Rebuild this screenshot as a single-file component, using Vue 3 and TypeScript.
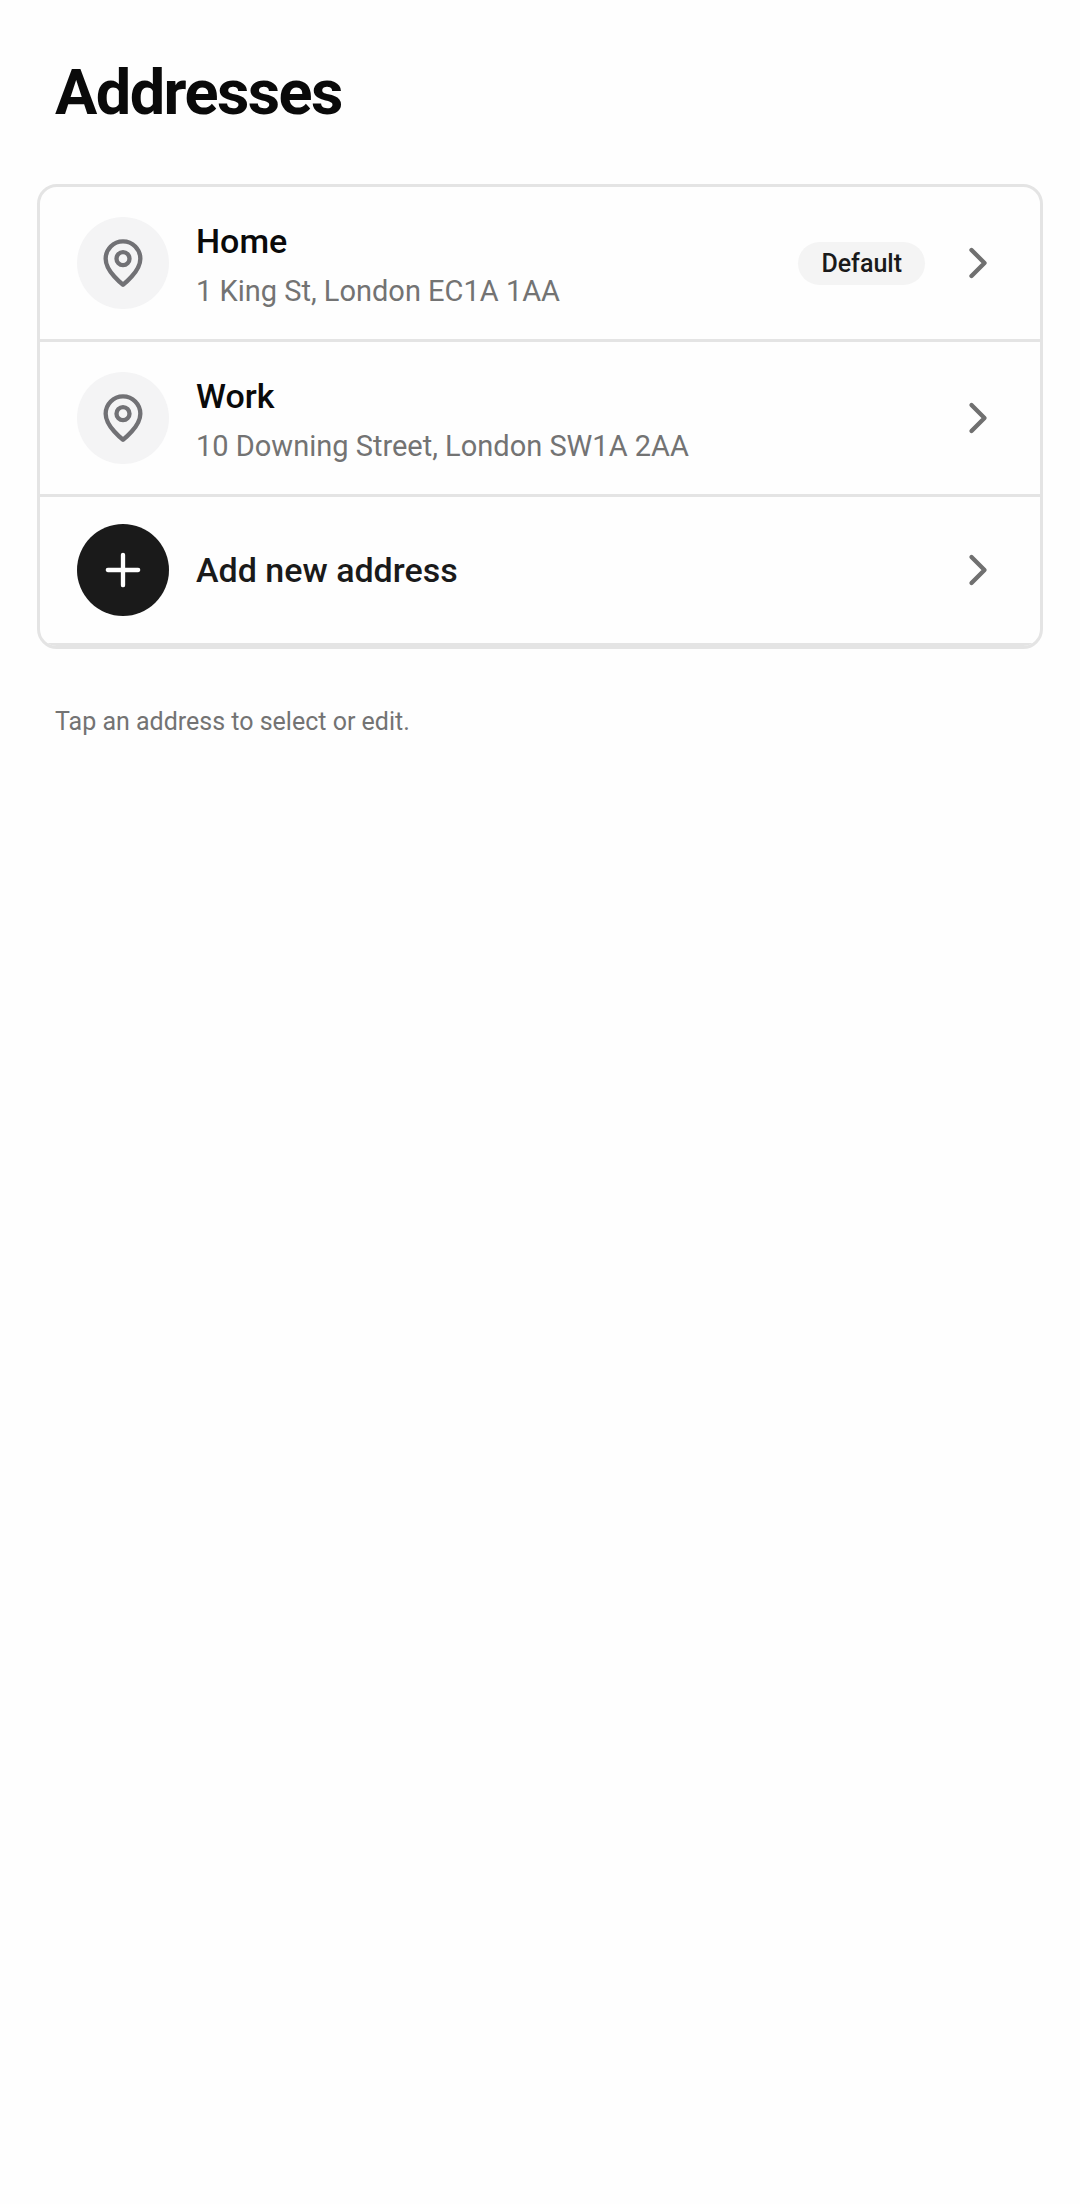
<script setup lang="ts">
interface Address {
  id: number
  label: string
  line: string
  isDefault: boolean
}

const addresses: Address[] = [
  { id: 1, label: 'Home', line: '1 King St, London EC1A 1AA', isDefault: true },
  { id: 2, label: 'Work', line: '10 Downing Street, London SW1A 2AA', isDefault: false },
]
</script>

<template>
  <main class="page">
    <h1 class="title">Addresses</h1>

    <ul class="card">
      <li v-for="address in addresses" :key="address.id" class="item">
        <button type="button" class="row">
          <span class="avatar">
            <svg class="icon" viewBox="0 0 24 24" aria-hidden="true">
              <path d="M20 10c0 6-8 12-8 12s-8-6-8-12a8 8 0 0 1 16 0Z" />
              <circle cx="12" cy="10" r="3" />
            </svg>
          </span>
          <span class="text">
            <span class="name">{{ address.label }}</span>
            <span class="line">{{ address.line }}</span>
          </span>
          <span v-if="address.isDefault" class="badge">Default</span>
          <svg class="icon chevron" viewBox="0 0 24 24" aria-hidden="true">
            <path d="m9 18 6-6-6-6" />
          </svg>
        </button>
      </li>
      <li class="item">
        <button type="button" class="row">
          <span class="avatar avatar-dark">
            <svg class="icon" viewBox="0 0 24 24" aria-hidden="true">
              <path d="M5 12h14M12 5v14" />
            </svg>
          </span>
          <span class="text">
            <span class="name name-action">Add new address</span>
          </span>
          <svg class="icon chevron" viewBox="0 0 24 24" aria-hidden="true">
            <path d="m9 18 6-6-6-6" />
          </svg>
        </button>
      </li>
    </ul>

    <p class="hint">Tap an address to select or edit.</p>
  </main>
</template>

<style>
body {
  margin: 0;
  background: #fefefe;
}
</style>

<style scoped>
.page {
  box-sizing: border-box;
  min-height: 100vh;
  padding: 53px 37px;
  font-family: Roboto, "Liberation Sans", sans-serif;
  color: #0a0a0a;
}

.title {
  margin: 0 18px 51px;
  font-size: 63px;
  line-height: 80px;
  font-weight: 700;
  letter-spacing: -0.025em;
}

.card {
  margin: 0;
  padding: 0;
  list-style: none;
  border: 3px solid #e4e4e4;
  border-radius: 20px;
  overflow: hidden;
}

.item {
  border-bottom: 3px solid #e4e4e4;
}

.row {
  display: flex;
  align-items: center;
  gap: 27px;
  width: 100%;
  padding: 27px 36px 27px 37px;
  border: 0;
  background: transparent;
  font: inherit;
  color: inherit;
  text-align: left;
  cursor: pointer;
}

.avatar {
  display: flex;
  flex: none;
  align-items: center;
  justify-content: center;
  width: 92px;
  height: 92px;
  border-radius: 50%;
  background: #f4f4f5;
}

.avatar-dark {
  background: #1a1a1a;
}

.icon {
  flex: none;
  width: 52px;
  height: 52px;
  fill: none;
  stroke: #717175;
  stroke-width: 2;
  stroke-linecap: round;
  stroke-linejoin: round;
}

.chevron {
  stroke: #707070;
}

.avatar-dark .icon {
  stroke: #fefefe;
}

.text {
  display: flex;
  flex: 1;
  flex-direction: column;
  gap: 2px;
  min-width: 0;
}

.name {
  font-size: 34px;
  line-height: 54px;
  font-weight: 500;
}

.name-action {
  color: #1a1a1a;
}

.line {
  font-size: 29px;
  line-height: 42px;
  color: #737373;
}

.badge {
  padding: 0 23px;
  border-radius: 22px;
  background: #f4f4f4;
  font-size: 25px;
  line-height: 43px;
  font-weight: 500;
  color: #1a1a1a;
}

.hint {
  margin: 54px 18px 0;
  font-size: 25px;
  line-height: 38px;
  color: #737373;
}
</style>
